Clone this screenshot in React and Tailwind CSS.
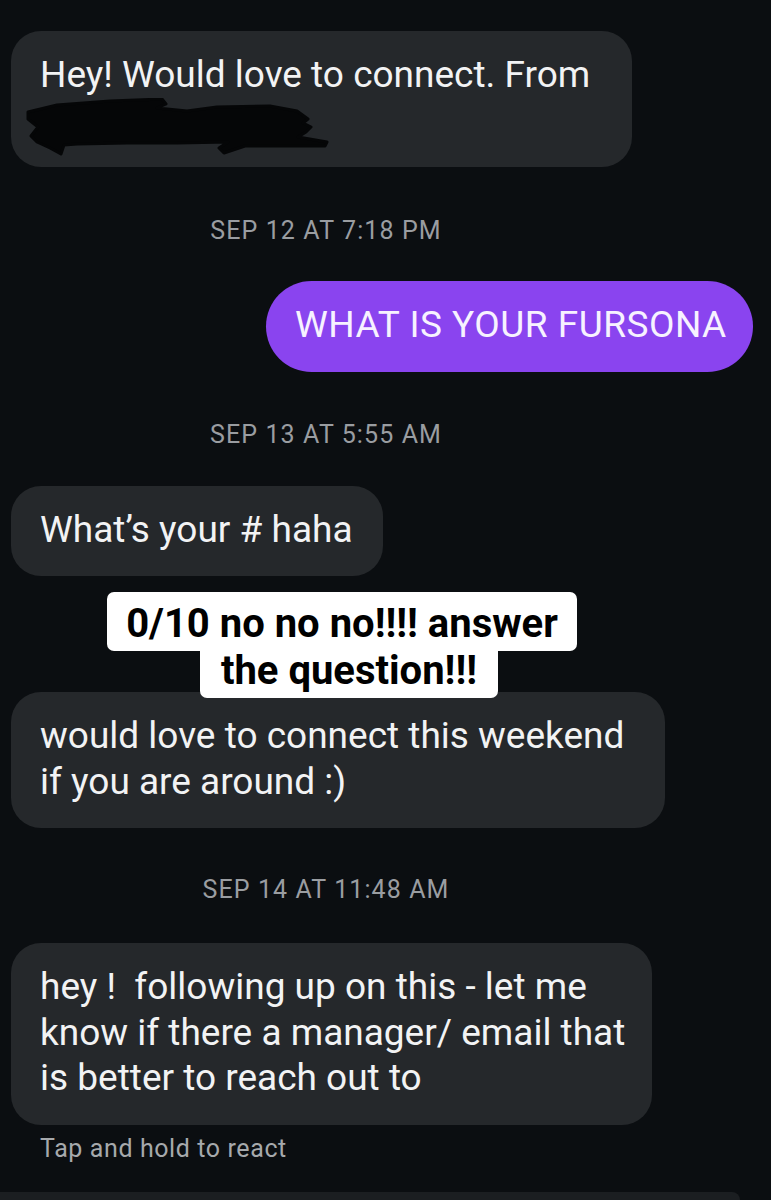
const Bubble = ({ width, children }) => (
  <div
    className={`${width} rounded-[30px] bg-[#25282b] px-[29px] pt-[21px] pb-[24px] text-[37px] leading-[45.5px] whitespace-nowrap text-[#f2f3f4]`}
  >
    {children}
  </div>
);

const Stamp = ({ children, className }) => (
  <div className={`pr-[112px] text-center text-[25px] leading-[26px] tracking-[1.1px] text-[#9a9da1] ${className}`}>
    {children}
  </div>
);

const Redaction = () => (
  <svg width="310" height="60" viewBox="0 0 310 60" className="-ml-[15px] block">
    <path
      d="M3 14 L32 7 L85 3 L137 1 L141 6 L132 10 L162 13 L192 9 L245 8 L272 13 L283 21 L278 25 L286 29 L281 34 L273 39 L302 44 L300 48 L252 48 L220 48 L199 55 L194 50 L203 44 L152 45 L102 45 L52 46 L39 47 L36 56 L25 50 L12 44 L6 38 L13 29 L3 21 Z"
      fill="#050607"
      stroke="#050607"
      strokeWidth="3"
      strokeLinejoin="round"
    />
  </svg>
);

export default function App() {
  return (
    <div className="flex h-[1200px] flex-col overflow-hidden bg-[#0b0e11] font-['Roboto',sans-serif]">
      <div className="flex flex-1 flex-col pl-[11px] pr-[18px] pt-[31px]">
        <Bubble width="w-[621px]">
          <div>Hey! Would love to connect. From</div>
          <div className="h-[45.5px]">
            <Redaction />
          </div>
        </Bubble>

        <Stamp className="mt-[51px]">SEP 12 AT 7:18 PM</Stamp>

        <div className="mt-[37px] w-[487px] self-end rounded-full bg-[#8a44ef] px-[29px] pt-[21px] pb-[24px] text-[37px] leading-[45.5px] tracking-[0.5px] whitespace-nowrap text-[#f7f2ff]">
          WHAT IS YOUR FURSONA
        </div>

        <Stamp className="mt-[50px]">SEP 13 AT 5:55 AM</Stamp>

        <div className="mt-[38px]">
          <Bubble width="w-[372px]">What’s your # haha</Bubble>
        </div>

        <div className="relative z-10 mt-[16px] -mb-[6px] flex flex-col items-center pr-[80px] text-[40px] font-bold leading-[40px] whitespace-nowrap text-black">
          <span className="flex h-[59px] w-[470px] items-center justify-center rounded-[7px] bg-white pt-[4px]">
            0/10 no no no!!!! answer
          </span>
          <span className="-mt-[12px] ml-[14px] flex h-[59px] w-[298px] items-center justify-center rounded-[7px] bg-white pt-[4px]">
            the question!!!
          </span>
        </div>

        <Bubble width="w-[654px]">
          <div>would love to connect this weekend</div>
          <div>if you are around :)</div>
        </Bubble>

        <Stamp className="mt-[49px]">SEP 14 AT 11:48 AM</Stamp>

        <div className="mt-[40px]">
          <Bubble width="w-[641px]">
            <div>hey !&nbsp; following up on this - let me</div>
            <div>know if there a manager/ email that</div>
            <div>is better to reach out to</div>
          </Bubble>
        </div>

        <div className="mt-[10px] pl-[29px] text-[25px] leading-[28px] tracking-[0.6px] text-[#a6a9ac]">
          Tap and hold to react
        </div>
      </div>

      <div className="mr-[31px] h-[8px] shrink-0 rounded-tr-[30px] bg-[#1b1e21]" />
    </div>
  );
}
